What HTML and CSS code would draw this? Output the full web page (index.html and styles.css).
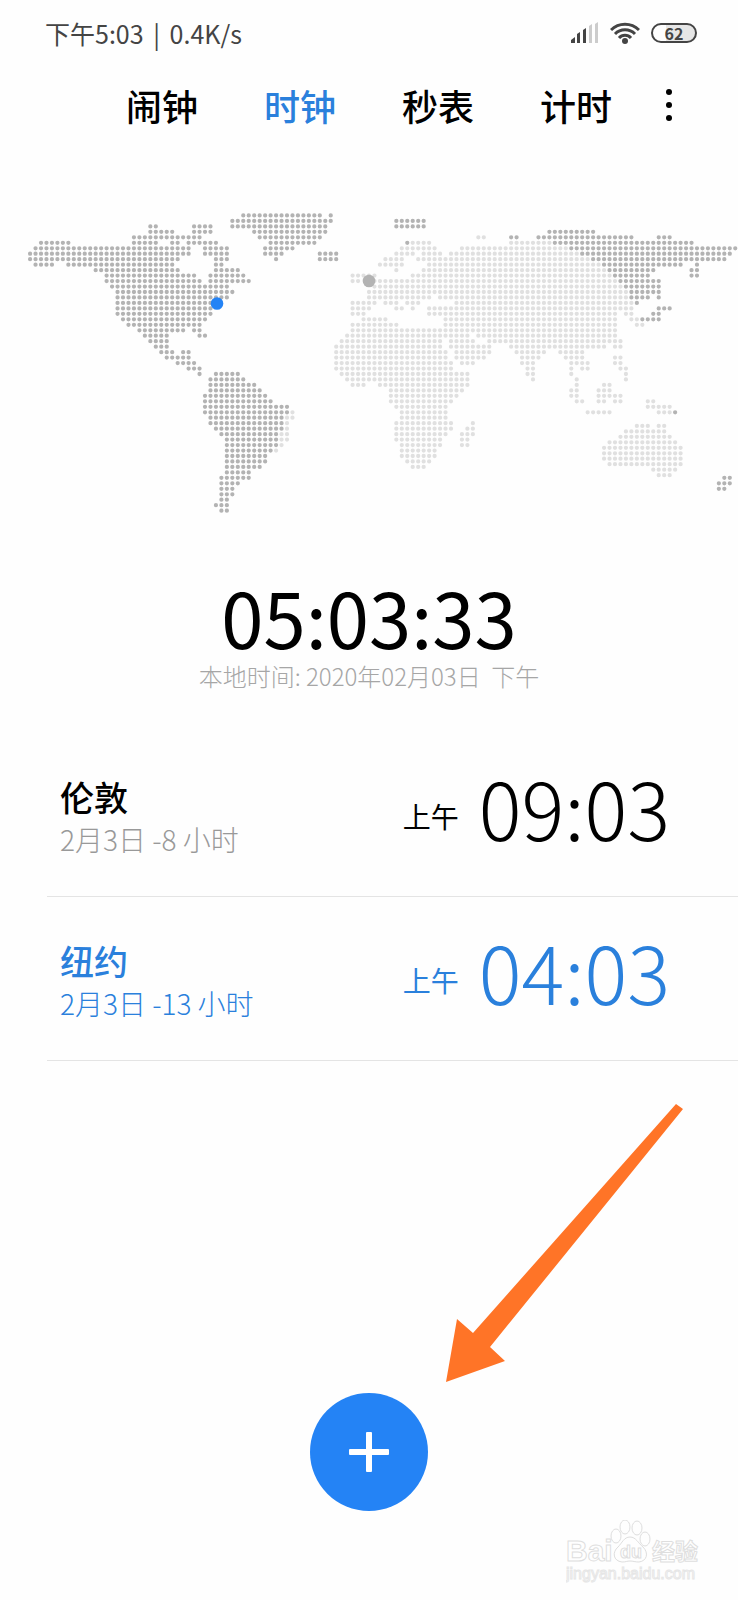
FILE: index.html
```html
<!DOCTYPE html>
<html lang="zh-CN">
<head>
    <meta charset="UTF-8">
    <meta name="viewport" content="width=device-width, initial-scale=1">
    <title>时钟</title>
    <link rel="stylesheet" href="styles.css">
</head>
<body>
    <div class="status">
        <span class="status_text">下午5:03 <span class="status_line">|</span> 0.4K/s</span>
        <div class="status_icons">
            <svg class="signal" width="28" height="22" viewBox="0 0 28 22">
                <path d="M0 21v-3l4-3v6zM6 21v-9l3-2v11zM12 21V8l3-2v15z" fill="#444"/>
                <path d="M18 21V4l3-2v19zM24 21V2l3-2v21z" fill="#ccc"/>
            </svg>
            <svg class="wifi" width="30" height="22" viewBox="0 0 30 22" fill="none" stroke="#444" stroke-width="3">
                <path d="M1 8a20 20 0 0 1 28 0M5 12a14 14 0 0 1 20 0M9 16a8 8 0 0 1 12 0"/>
                <circle cx="15" cy="19" r="3" fill="#444" stroke="none"/>
            </svg>
            <span class="battery">62</span>
        </div>
    </div>
    <nav class="tabs">
        <a class="tab" href="#">闹钟</a>
        <a class="tab active" href="#">时钟</a>
        <a class="tab" href="#">秒表</a>
        <a class="tab" href="#">计时</a>
        <button class="more" aria-label="更多">
            <svg width="8" height="34" viewBox="0 0 8 34">
                <circle cx="4" cy="4" r="3"/>
                <circle cx="4" cy="17" r="3"/>
                <circle cx="4" cy="30" r="3"/>
            </svg>
        </button>
    </nav>
    <svg class="map" viewBox="-5.5 -1 135 56">
        <path class="dots day" id="day"/>
        <path class="dots night" id="night"/>
        <circle cx="62" cy="12" r="1.15" fill="#b3b3b3"/>
        <circle cx="34.2" cy="16.1" r="1.15" fill="#2483f5"/>
    </svg>
    <div class="local">
        <div class="local_time">05:03:33</div>
        <div class="local_date">本地时间: 2020年02月03日&nbsp; 下午</div>
    </div>
    <ul class="cities">
        <li class="city">
            <div class="city_info">
                <div class="city_name">伦敦</div>
                <div class="city_date">2月3日 -8 小时</div>
            </div>
            <span class="city_half">上午</span>
            <span class="city_time">09:03</span>
        </li>
        <li class="city current">
            <div class="city_info">
                <div class="city_name">纽约</div>
                <div class="city_date">2月3日 -13 小时</div>
            </div>
            <span class="city_half">上午</span>
            <span class="city_time">04:03</span>
        </li>
    </ul>
    <div class="bottom">
        <button class="add" aria-label="添加城市">
            <svg width="40" height="40" viewBox="0 0 40 40">
                <rect x="0" y="17" width="40" height="6" rx="1"/>
                <rect x="17" y="0" width="6" height="40" rx="1"/>
            </svg>
        </button>
        <svg class="arrow" width="238" height="278" viewBox="0 0 238 278">
            <path d="M230 0L237 5L44 243L59 257L0 278L11 215L27 229z" fill="#ff7427"/>
        </svg>
        <svg class="mark" width="134" height="66" viewBox="0 0 134 66">
            <text class="mark_big" x="0" y="41">Bai</text>
            <path d="M64 17c-6 0-8 6-12 10-6 5-5 14 4 15 4 0 5-1 8-1s5 1 9 1c8-1 10-9 4-15-5-4-7-10-13-10z"/>
            <ellipse cx="50" cy="16" rx="5" ry="7"/>
            <ellipse cx="59" cy="7" rx="5" ry="7"/>
            <ellipse cx="71" cy="8" rx="5" ry="7"/>
            <ellipse cx="79" cy="19" rx="5" ry="7"/>
            <text class="mark_du" x="54" y="38">du</text>
            <text class="mark_cn" x="86" y="40">经验</text>
            <text class="mark_url" x="0" y="59">jingyan.baidu.com</text>
        </svg>
    </div>
    <script>
        //每行格式: "行号: 起始列-结束列 ..."
        var night = [
            "0: 39-53 55",
            "1: 37-55 67-72",
            "2: 22-23 30-33 37-54 67-72",
            "3: 22-26 30-33 41-54 95-103",
            "4: 19-31 42-53 88-89 93-110 115-117",
            "5: 2-7 19-23 26-27 29-34 44-52 69 96-121",
            "6: 1-29 32-36 43-48 99-129",
            "7: 0-29 32-36 43-46 53-56 101-128",
            "8: 0-27 34-36 45 53-56 103-127",
            "9: 1-4 7-26 34-35 105-119 122",
            "10: 12-27 34-38 106-114 121-122",
            "11: 14-30 33-39 107-113 121-122",
            "12: 14-31 33-40 108-115",
            "13: 15-36 109-115",
            "14: 16-37 110-115",
            "15: 16-36 110-113 115",
            "16: 16-33 111",
            "17: 16-33 115-117",
            "18: 16-33 114-115",
            "19: 17-32 112-115",
            "20: 18-31",
            "21: 20-28 30-31",
            "22: 21-25 31-32",
            "23: 22-25",
            "24: 23-25",
            "25: 24-26 28-29",
            "26: 25-29",
            "27: 27-30",
            "28: 29-31",
            "29: 31 34-38",
            "30: 33-39",
            "31: 33-41",
            "32: 33-42",
            "33: 32-43",
            "34: 32-44",
            "35: 32-47",
            "36: 32-47 118",
            "37: 33-46",
            "38: 33-46",
            "39: 34-46",
            "40: 35-45",
            "41: 36-45",
            "42: 36-45",
            "43: 36-44",
            "44: 36-43",
            "45: 36-43",
            "46: 36-42",
            "47: 36-40",
            "48: 35-40 127-128",
            "49: 35-38 126-128",
            "50: 35-37 126-127",
            "51: 35-37",
            "52: 35-36",
            "53: 34-36",
            "54: 35-36"
        ];
        var day = [
            "4: 82-83",
            "5: 70-73 88-95",
            "6: 68-74 79-98",
            "7: 67-70 72-75 77-100",
            "8: 65-68 71-75 76-102",
            "9: 64-68 73-104",
            "10: 67 72-105",
            "11: 59-63 70-106",
            "12: 59-60 63-107",
            "13: 63-108",
            "14: 62-109",
            "15: 62-73 75-109",
            "16: 59-63 65-67 69-71 78-110",
            "17: 59-62 67-68 70 73-110",
            "18: 59-61 73-107 109-110",
            "19: 61-65 76-107 110-111",
            "20: 59-67 76-107 111-112",
            "21: 59-107",
            "22: 58-80 82-107",
            "23: 57-75 77-81 84-108",
            "24: 56-75 77-84 88-105 107-108",
            "25: 56-76 78-84 89-94 97-101",
            "26: 56-76 78-83 90-93 98-101 107-108",
            "27: 56-77 79-81 90-92 99-102 107-108",
            "28: 56-77 91-92 99 101-102 108-109",
            "29: 57-80 91-92 99 109",
            "30: 58-80 92 100 109",
            "31: 59-61 64-80 100 105-106",
            "32: 66-79 99-100 104-106",
            "33: 66-78 99-100 104-108",
            "34: 66-77 100-101 104-105 107-108 113-114",
            "35: 67-76 113-117",
            "36: 48 68-76 102-106 115-117",
            "37: 47-48 68-76",
            "38: 47 67-77 81",
            "39: 47 67-77 80-81",
            "40: 46-47 67-76 79-81",
            "41: 46-47 67-75 79-80",
            "42: 46 68-75 79-80",
            "43: 45 68-74",
            "44: 68-74",
            "45: 69-73",
            "46: 70-72",
            "38.5: 111-113 115-116",
            "39.5: 109-116",
            "40.5: 108-117",
            "41.5: 106-118",
            "42.5: 105-119",
            "43.5: 105-119",
            "44.5: 105-119",
            "45.5: 106-119",
            "46.5: 114-118",
            "47.5: 115-117"
        ];
        //虚线长度为0加圆头, 每一列画一个圆点
        function drawDots(id,rows){
            var d = "";
            rows.forEach(function(row){
                var parts = row.split(": ");
                parts[1].split(" ").forEach(function(run){
                    var cols = run.split("-");
                    var len = (cols[1] || cols[0]) - cols[0];
                    d += "M" + cols[0] + " " + parts[0] + "h" + (len + 0.02);
                });
            });
            document.getElementById(id).setAttribute("d",d);
        }
        drawDots("day",day);
        drawDots("night",night);
    </script>
</body>
</html>
```
FILE: styles.css
```css
*{
    box-sizing:border-box;
}
body{
    margin:0;
    min-height:100vh;
    display:flex;
    flex-direction:column;
    background:#fefefe;
    color:#000;
    font-family:"Noto Sans CJK SC","Noto Sans",sans-serif;
}
.status{
    display:flex;
    justify-content:space-between;
    align-items:center;
    height:66px;
    padding:0 41px 0 45px;
    color:#444;
}
.status_text{
    font-size:25px;
    line-height:32px;
}
.status_line{
    margin:0 4px;
}
.status_icons{
    display:flex;
    align-items:center;
    gap:11px;
}
.battery{
    width:46px;
    height:20px;
    border:2px solid #444;
    border-radius:10px;
    background:linear-gradient(to right,#fefefe 30%,#e6e6e6 30%);
    font-size:16px;
    font-weight:700;
    line-height:16px;
    text-align:center;
}
.tabs{
    display:flex;
    justify-content:flex-end;
    align-items:center;
    height:78px;
    padding-right:54px;
}
.tab{
    margin-right:66px;
    color:#000;
    font-size:36px;
    font-weight:500;
    line-height:48px;
    text-decoration:none;
}
.tab:nth-child(4){
    margin-right:42px;
}
.tab.active{
    color:#2a80dc;
}
.more{
    display:flex;
    justify-content:center;
    width:30px;
    padding:0;
    border:none;
    background:none;
    cursor:pointer;
}
.map{
    display:block;
    width:100%;
    margin-top:66px;
}
.dots{
    fill:none;
    stroke-width:0.78;
    stroke-linecap:round;
    stroke-dasharray:0 1;
}
.day{
    stroke:#e0e0e0;
}
.night{
    stroke:#b3b3b3;
}
.local{
    margin-top:58px;
    text-align:center;
}
.local_time{
    font-size:76px;
    line-height:84px;
}
.local_date{
    color:#a6a6a6;
    font-size:24px;
    font-weight:300;
    line-height:36px;
}
.cities{
    list-style:none;
    margin:39px 0 0 47px;
    padding:0;
}
.city{
    display:flex;
    align-items:center;
    height:164px;
    padding:0 68px 0 13px;
    border-bottom:1px solid #e4e4e4;
}
.city_info{
    flex:1;
    padding-top:6px;
}
.city_name{
    font-size:34px;
    font-weight:500;
    line-height:42px;
}
.city_date{
    color:#999;
    font-size:28px;
    font-weight:300;
    line-height:42px;
}
.city_half{
    margin-right:20px;
    padding-top:2px;
    font-size:28px;
}
.city_time{
    padding-bottom:18px;
    font-size:80px;
    font-weight:300;
    line-height:84px;
}
.current,
.current .city_date{
    color:#2a80dc;
}
.bottom{
    position:relative;
    display:flex;
    justify-content:center;
    margin-top:auto;
    padding-bottom:89px;
}
.add{
    display:flex;
    justify-content:center;
    align-items:center;
    width:118px;
    height:118px;
    padding:0;
    border:none;
    border-radius:50%;
    background:#2483f5;
    cursor:pointer;
}
.add svg{
    fill:#fff;
}
.arrow{
    position:absolute;
    right:54px;
    bottom:218px;
}
.mark{
    position:absolute;
    right:38px;
    bottom:14px;
    fill:#fefefe;
    stroke:#dedede;
    stroke-width:1;
    font-family:"Liberation Sans","Noto Sans CJK SC",sans-serif;
}
.mark_big{
    font-size:30px;
    font-weight:700;
}
.mark_du{
    font-size:18px;
    font-weight:700;
}
.mark_cn{
    font-size:23px;
    font-weight:700;
}
.mark_url{
    font-size:16px;
    stroke:#e6e6e6;
}
```
